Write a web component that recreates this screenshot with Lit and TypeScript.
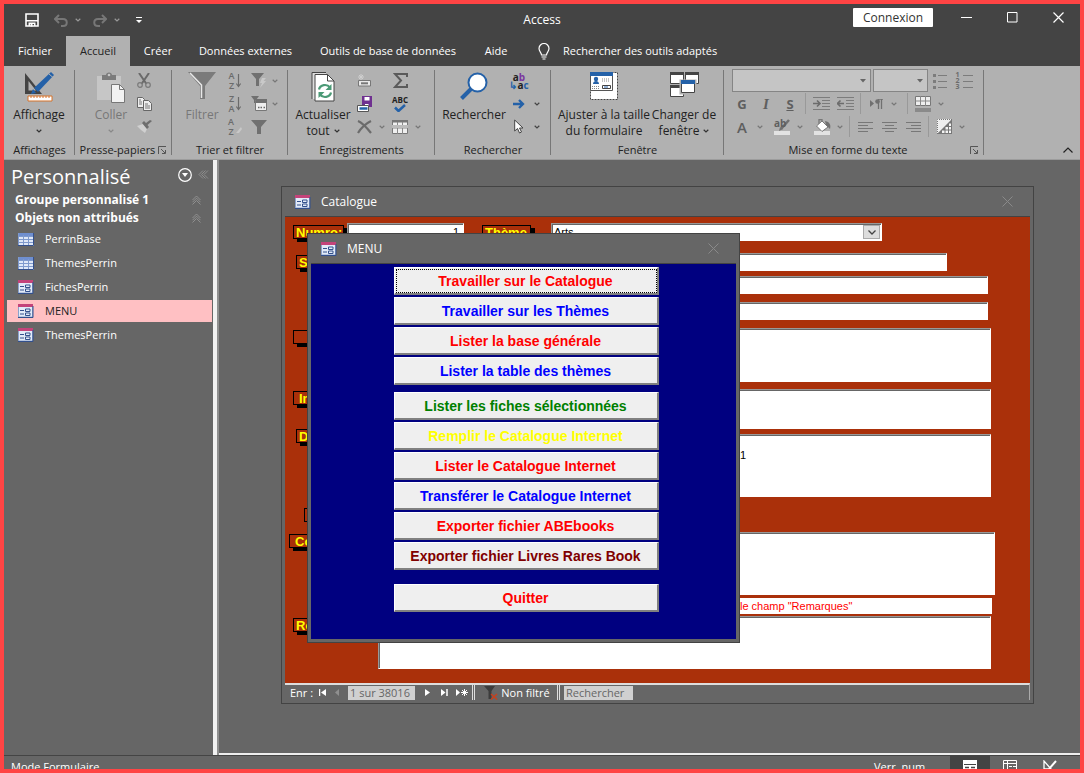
import { LitElement, html, css, svg, TemplateResult } from "lit";
import { customElement, property } from "lit/decorators.js";
import { classMap } from "lit/directives/class-map.js";

const icon = (w: number, h: number, body: TemplateResult) =>
  html`<svg width=${w} height=${h} viewBox="0 0 ${w} ${h}" fill="none" aria-hidden="true">${body}</svg>`;

const chevron = (color = "#777") => icon(6, 4, svg`<path d="M.7.8 3 3 5.3.8" stroke=${color} stroke-width="1.2"/>`);

const icons = {
  save: icon(14, 14, svg`<path d="M1 1h12v12H1z" stroke="#fff" stroke-width="1.6"/><path d="M1 7h12v1.500H1zM3.500 9.500h7V13H9v-2H5v2H3.500z" fill="#fff"/><path d="M5.500 11h2v2.500h-2z" fill="#fff"/>`),
  undo: icon(14, 13, svg`<path d="M1 5h8c5 0 5 7 0 7H7M5 1 1 5l4 4" stroke="#777" stroke-width="2"/>`),
  redo: icon(14, 13, svg`<path d="M13 5H5C0 5 0 12 5 12h2M9 1l4 4-4 4" stroke="#777" stroke-width="2"/>`),
  custom: icon(6, 6, svg`<path d="M0 .5h6" stroke="#fff"/><path d="M0 3h6L3 6z" fill="#fff"/>`),
  min: icon(11, 11, svg`<path d="M0 5.500h11" stroke="#fff"/>`),
  max: icon(11, 11, svg`<path d="M.5.5h9.500v9.500H.5z" stroke="#fff"/>`),
  close: icon(11, 11, svg`<path d="M.5.5l10 10M10.500.5l-10 10" stroke="#fff" stroke-width="1.200"/>`),
  bulb: icon(12, 17, svg`<path d="M3.500 12C3.500 9.500 1 8.500 1 5.500a5 5 0 0 1 10 0c0 3-2.500 4-2.500 6.500zM3.500 14h5M4.500 16h3" stroke="#fff" stroke-width="1.200"/>`),
  view: icon(32, 30, svg`<path d="M2 1v21h17z" fill="#444"/><path d="M5.500 9v9.500H13z" fill="#b1b1b1"/><path d="M28 0l3 3-16 17-4-4z" fill="#2461a8"/><path d="M10 17l3 4-5 1z" fill="#2461a8"/><path d="M26 2l4 3.500" stroke="#b1b1b1"/><path d="M5 24h24v5H5z" fill="#fff" stroke="#d5722a"/><path d="M8 24v2M11 24v2M14 24v2M17 24v2M20 24v2M23 24v2M26 24v2" stroke="#d5722a"/>`),
  paste: icon(28, 31, svg`<path d="M0 4h24v24H0z" fill="#c6c6c6"/><path d="M5 8V3h4C9-.5 15-.5 15 3h4v5z" fill="#7b7b7b"/><circle cx="12" cy="3" r="1.300" fill="#c6c6c6"/><path d="M14.500 12.500h8l5 5v13h-13z" fill="#f2f2f2" stroke="#777"/><path d="M22.500 12.500v5h5" stroke="#777"/>`),
  cut: icon(14, 15, svg`<path d="M2 0l7.500 11M12 0 4.500 11" stroke="#6a6a6a" stroke-width="2"/><circle cx="3" cy="12" r="2.300" stroke="#7a7a7a" stroke-width="1.200"/><circle cx="11" cy="12" r="2.300" stroke="#7a7a7a" stroke-width="1.200"/>`),
  copy: icon(15, 14, svg`<path d="M.5.5h5l2 2v8h-7z" fill="#eee" stroke="#666"/><path d="M6.500 3.500h5l3 3v7h-8z" fill="#eee" stroke="#666"/><path d="M2 3h2M2 5h3M2 7h3M8 7h3M8 9h5M8 11h5" stroke="#777"/>`),
  brush: icon(15, 13, svg`<path d="M0 6l6-2 4 5-2 4-4-3z" fill="#d0d0d0"/><path d="M5 3l5 6 2-2-1.500-2L15 1l-2-1-4 3-2-2z" fill="#6e6e6e"/>`),
  filter: icon(28, 28, svg`<path d="M0 0h28L17 14v13h-5V14z" fill="#7b7b7b"/><path d="M2 1l11.500 12v13" stroke="#e8e8e8" stroke-width="1.500"/>`),
  funnel: icon(16, 14, svg`<path d="M0 0h16L10 7v7H6V7z" fill="#707070"/>`),
  bolt: icon(16, 15, svg`<path d="M0 0h13L8 6v7H5V6z" fill="#707070"/><path d="M11 5l4 0-2.500 3H15l-6 7 2-5H9z" fill="#c9c9c9"/>`),
  advanced: icon(17, 16, svg`<path d="M0 0h8L5 4v3H3V4z" fill="#707070"/><path d="M4.500 4.500h11v10h-11z" fill="#eee" stroke="#777"/><path d="M5 3h11v4H5z" fill="#707070"/><path d="M7 11.500h1.500M9.500 11.500H11M12.500 11.500H14" stroke="#666" stroke-width="1.500"/>`),
  refresh: icon(24, 30, svg`<path d="M1 1h14v26H1z" fill="#ddd"/><path d="M1 27V.5h14" stroke="#444"/><path d="M4 2.500h12.500l6.500 6.500v20H4z" fill="#fff" stroke="#444"/><path d="M16.500 2.500v6.500H23" stroke="#444"/><path d="M8 17.500c1-5 8-6 11-2M20 20.500c-1 5-8 6-11 2" stroke="#4b9a76" stroke-width="2.200"/><path d="M20.500 12v6h-6zM7.500 26v-6h6z" fill="#4b9a76"/>`),
  newRec: icon(13, 13, svg`<path d="M3 0v6M0 3h6M1 1l4 4M5 1 1 5" stroke="#cfcfcf"/><path d="M.5 6.500h12v5.500H.5z" fill="#e8e8e8" stroke="#777"/><path d="M3 9.300h7" stroke="#777" stroke-width="2"/>`),
  saveRec: icon(15, 16, svg`<path d="M5 0h10v11H5z" fill="#6f3090"/><path d="M7.500 1h5v3.500h-5zM8 8h3.500v3H8z" fill="#fff"/><path d="M.5 9.500h11v6H.5z" fill="#fff" stroke="#555"/><path d="M2.500 12.500h8" stroke="#2461a8" stroke-width="2.500"/>`),
  cross: icon(15, 14, svg`<path d="M1 1c5 2 9 7 13 12M14 1C8 4 4 8 1 13" stroke="#6c6c6c" stroke-width="2.200"/>`),
  sigma: icon(15, 15, svg`<path d="M14 4V1H2l6 6.500L2 14h12v-3" stroke="#5a5a5a" stroke-width="2"/>`),
  check: icon(12, 8, svg`<path d="M1 3.500 4.500 7 11 1" stroke="#2461a8" stroke-width="2.500"/>`),
  more: icon(16, 14, svg`<path d="M.5.500h15v13H.5z" fill="#f0f0f0" stroke="#777"/><path d="M0 0h16v2.500H0z" fill="#777"/><path d="M0 8h16M5.500 2v12M10.500 2v12" stroke="#888"/><path d="M0 6.500h16" stroke="#bbb" stroke-width="3"/>`),
  find: icon(28, 28, svg`<path d="M1.500 26.500 11 17" stroke="#2461a8" stroke-width="4"/><circle cx="17.500" cy="10.500" r="9" fill="#fff" stroke="#2461a8" stroke-width="2"/>`),
  arrow: icon(12, 10, svg`<path d="M0 5h10M6 1l4 4-4 4" stroke="#2461a8" stroke-width="2.300"/>`),
  pointer: icon(10, 15, svg`<path d="M.7 1v11L3.500 9.500l2 4.500 2-1-2-4H9z" fill="#fff" stroke="#444"/>`),
  fit: icon(28, 28, svg`<path d="M.5.5h27v27H.5z" fill="#fff" stroke="#444" stroke-dasharray="2 1"/><path d="M.5.5h22v18H.5z" fill="#fff" stroke="#555"/><path d="M0 0h23v4H0z" fill="#2461a8"/><circle cx="6" cy="7" r="2.200" fill="#2461a8"/><path d="M3 12c0-4 6-4 6 0z" fill="#2461a8"/><path d="M12 7h8M12 9h8M2 14.500h8M2 16.500h8" stroke="#888" stroke-dasharray="1 1"/><path d="M12.500 13.500h8v3h-8z" fill="#fff" stroke="#444"/><path d="M14 15h4" stroke="#2461a8"/>`),
  switchWin: icon(29, 26, svg`<path d="M.5 1.500h13v10H.5zM15.500 1.500h13v10h-13zM.5 14.500h13v10H.5z" fill="#fff" stroke="#444"/><path d="M0 0h14v3H0zM15 0h14v3H15zM0 13h14v3H0z" fill="#444"/><path d="M10.500 8.500h15v13h-15z" fill="#fff" stroke="#b1b1b1" stroke-width="2"/><path d="M11.500 9.500h13v11h-13z" fill="#fff" stroke="#444"/><path d="M11 8h14v4H11z" fill="#2461a8"/>`),
  bullets: icon(14, 16, svg`<path d="M5 2.500h9M5 8.500h9M5 14.500h9" stroke="#7c7c7c"/><path d="M0 2.500h3M0 8.500h3M0 14.500h3" stroke="#7c7c7c" stroke-width="3"/>`),
  numbers: icon(10, 16, svg`<path d="M0 2.500h10M0 8.500h10M0 14.500h10" stroke="#7c7c7c"/>`),
  indent: icon(17, 13, svg`<path d="M0 .5h17M9 3.500h8M9 6.500h8M9 9.500h8M0 12.500h17" stroke="#7c7c7c"/><path d="M0 6.500h6M4 3.500l3 3-3 3" stroke="#6c6c6c" stroke-width="1.600"/>`),
  outdent: icon(17, 13, svg`<path d="M0 .5h17M9 3.500h8M9 6.500h8M9 9.500h8M0 12.500h17" stroke="#7c7c7c"/><path d="M7 6.500H1M3.500 3.500l-3 3 3 3" stroke="#6c6c6c" stroke-width="1.600"/>`),
  para: icon(13, 10, svg`<path d="M0 1v7l4-3.500z" fill="#707070"/><path d="M9 0h4M8.500 0v10M11.500 0v10" stroke="#707070" stroke-width="1.300"/><circle cx="7.500" cy="2.500" r="2.300" fill="#707070"/>`),
  gridFill: icon(16, 16, svg`<path d="M.5.5h15v9H.5z" fill="#eee" stroke="#777"/><path d="M0 5h16M5.500 0v10M10.500 0v10" stroke="#888"/><path d="M0 12h16v4H0z" fill="#8a8a8a"/>`),
  bucket: icon(17, 16, svg`<path d="M0 12h16v4H0z" fill="#e2e2e2"/><path d="M5 5V.7h3V6" stroke="#777" stroke-width="1.300"/><path d="M11 2c5 1 6 4 5 8l-4-4z" fill="#707070"/><path d="M8 2l6 6-6 4.500L2.500 7z" fill="#fff" stroke="#777"/>`),
  pen: icon(16, 16, svg`<path d="M0 12h16v4H0z" fill="#e2e2e2"/><path d="M15 1 7 10" stroke="#707070" stroke-width="2.500"/><path d="M6 8l3 2-4 2z" fill="#707070"/>`),
  alignL: icon(15, 10, svg`<path d="M0 .5h15M0 3.500h10M0 6.500h15M0 9.500h10" stroke="#777"/>`),
  alignC: icon(15, 10, svg`<path d="M0 .5h15M3 3.500h9M0 6.500h15M3 9.500h9" stroke="#777"/>`),
  alignR: icon(15, 10, svg`<path d="M0 .5h15M5 3.500h10M0 6.500h15M5 9.500h10" stroke="#777"/>`),
  altRow: icon(15, 15, svg`<path d="M0 0h15v15H0z" fill="#eee"/><path d="M.5 15V.5H15" stroke="#777" stroke-dasharray="1 1"/><path d="M15 0v15H0z" fill="#777"/><path d="M8.500 8h2.500v2.500H8.500zM12 4.500h2V7h-2zM12 8h2v2.500h-2zM5 11.500h2.500V14H5zM8.500 11.500h2.500V14H8.500zM12 11.500h2V14h-2z" fill="#f4f4f4"/>`),
  launcher: icon(8, 8, svg`<path d="M.5 8V.5H8M7.500 4v3.500H4M3 3l4 4" stroke="#555"/>`),
  collapse: icon(10, 6, svg`<path d="M.5 5.500 5 1l4.500 4.500" stroke="#222" stroke-width="1.200"/>`),
  navDown: icon(14, 14, svg`<circle cx="7" cy="7" r="6.300" stroke="#fff" stroke-width="1.200"/><path d="M4 5h6L7 9z" fill="#fff"/>`),
  navLeft: icon(11, 9, svg`<path d="M5 .5l-4 4 4 4M7.500.5l-4 4 4 4M10 .5l-4 4 4 4" stroke="#999" stroke-width=".8"/>`),
  navUp: icon(9, 10, svg`<path d="M.5 5l4-4 4 4M.5 9.500l4-4 4 4M.5 7.200l4-4 4 4" stroke="#999" stroke-width=".8"/>`),
  table: icon(16, 13, svg`<path d="M0 0h16v13H0z" fill="#dfe8f8"/><path d="M0 0h16v3H0z" fill="#6f8fd0"/><path d="M0 3.500h16M0 6.500h16M0 9.500h16M.5 0v13M5.500 2v11M10.500 2v11" stroke="#7f9ace"/><path d="M15.500 0v12.500H0" stroke="#33508c"/>`),
  form: icon(16, 14, svg`<path d="M.5.5h14v12.500H.5z" fill="#e3ebf8" stroke="#8ca2cc"/><path d="M0 0h15v3H0z" fill="#c4437a"/><path d="M2 6.500h4M2 10h4" stroke="#33508c"/><path d="M7.500 5h4.500v2.500H7.500zM7.500 9h4.500v2.500H7.500z" stroke="#33508c"/><path d="M15 2v11.500H0" stroke="#33508c"/>`),
  winClose: icon(11, 11, svg`<path d="M.5.5l10 10M10.500.5l-10 10" stroke="#8a8a8a"/>`),
  first: icon(7, 7, svg`<path d="M.5 0v7" stroke="#fff" stroke-width="1.500"/><path d="M7 0v7L2 3.500z" fill="#fff"/>`),
  prev: icon(4, 7, svg`<path d="M4 0v7L0 3.500z" fill="#8f8f8f"/>`),
  next: icon(5, 7, svg`<path d="M0 0v7l5-3.500z" fill="#fff"/>`),
  last: icon(7, 7, svg`<path d="M6 0v7" stroke="#fff" stroke-width="1.500"/><path d="M0 0v7l4.500-3.500z" fill="#fff"/>`),
  add: icon(12, 7, svg`<path d="M0 0v7l4-3.500z" fill="#fff"/><path d="M8.500 0v7M5 3.500h7M6 1l5 5M11 1 6 6" stroke="#fff"/>`),
  noFilter: icon(14, 14, svg`<path d="M0 0h11L7.500 5v8h-3V5z" fill="#3c3c3c"/><path d="M7 8l6 5.500M13 8l-6 5.500" stroke="#c8401c" stroke-width="1.500"/>`),
  comboArrow: icon(8, 5, svg`<path d="M.5.500 4 4 7.500.5" stroke="#444" stroke-width="1.300"/>`),
  formView: icon(14, 14, svg`<path d="M0 0h14v14H0z" fill="#fff"/><path d="M1 4.500h12" stroke="#444"/><path d="M2 7.500h4M8 7.500h4M2 10.500h4M8 10.500h4" stroke="#444" stroke-width="1.500"/>`),
  sheetView: icon(14, 14, svg`<path d="M.5.5h13v13H.5zM0 3.500h14M4.500 0v14" stroke="#fff"/><path d="M6 6.500h3M10 6.500h3M6 9.500h3M10 9.500h3M6 12.500h3" stroke="#fff"/>`),
  designView: icon(14, 14, svg`<path d="M1 1v8h7z" stroke="#fff" stroke-width="1.300"/><path d="M13 1 6 9" stroke="#fff" stroke-width="2"/><path d="M0 11.500h14" stroke="#fff"/>`),
};

const base = css`
  * { box-sizing: border-box; }
  button, input, select, textarea { font: inherit; color: inherit; margin: 0; border-radius: 0; }
  button { border: 0; padding: 0; background: none; display: flex; align-items: center; justify-content: center; }
  svg { display: block; flex: none; }
`;

@customElement("access-ribbon")
export class AccessRibbon extends LitElement {
  static styles = [base, css`
    :host { display: flex; height: 94px; background: #b1b1b1; color: #222; font-size: 12px; line-height: 16px; border-bottom: 1px solid #9c9c9c; overflow: hidden; }
    .group { flex: none; position: relative; display: flex; flex-direction: column; }
    .group::after { content: ""; width: 1px; background: #777; position: absolute; right: 0; top: 4px; bottom: 4px; }
    .g1 { width: 71px; } .g2 { width: 97px; } .g3 { width: 116px; } .g4 { width: 147px; }
    .g5 { width: 116px; } .g6 { width: 173px; } .g7 { width: 260px; }
    .tools { height: 75px; display: flex; padding-left: 6px; }
    .g1 .tools { padding-left: 5px; }
    .g2 .tools { padding-left: 15px; }
    .g3 .tools { padding-left: 9px; }
    .caption { display: flex; height: 18px; line-height: 18px; padding: 0 4px; white-space: nowrap; font-size: 11px; }
    .caption span { flex: 1; text-align: center; }
    .caption button { width: 12px; }
    .big { flex-direction: column; justify-content: flex-start; width: 60px; padding-top: 6px; white-space: nowrap; }
    .big .art { height: 35px; display: flex; align-items: flex-start; }
    .big .line { display: flex; align-items: center; gap: 4px; height: 16px; }
    .narrow { width: 42px; } .wide { width: 94px; } .mid { width: 66px; } .std { width: 58px; }
    .off { color: #777; }
    .stack { display: flex; flex-direction: column; padding-top: 3px; }
    .row { display: flex; height: 23px; align-items: center; }
    .ic { width: 24px; height: 23px; flex: none; }
    .dd { width: 12px; height: 23px; flex: none; }
    .g3 .dd { width: 8px; }
    .az { font-size: 9px; line-height: 10px; font-weight: 600; color: #6b6b6b; gap: 2px; }
    .az b, .ab b, .nums b { display: block; font-weight: inherit; white-space: nowrap; }
    .ab { flex-direction: column; font-size: 10px; line-height: 8px; font-weight: 700; }
    .p { color: #7a35a0; } .b { color: #2461a8; }
    .abc { flex-direction: column; font-size: 8px; line-height: 8px; font-weight: 700; }
    .nums { font-size: 7px; line-height: 6px; color: #6b6b6b; gap: 3px; font-weight: 700; }
    .bold { font-weight: 700; } .ital { font-style: italic; font-family: "Liberation Serif", serif; font-weight: 700; } .und { font-weight: 700; text-decoration: underline; }
    .fmt { color: #5f5f5f; font-size: 13px; }
    .ital.fmt { font-size: 15px; }
    .letter.fmt { font-size: 15px; font-weight: 600; }
    .sep { width: 1px; height: 21px; background: #999; margin: 0 3px; flex: none; }
    .space { width: 4px; flex: none; }
    .combo { position: relative; height: 23px; margin-left: 2px; }
    .combo select { appearance: none; width: 100%; height: 23px; border: 1px solid #858585; background: #c5c5c5; padding: 0 6px; }
    .combo svg { position: absolute; right: 4px; top: 10px; pointer-events: none; }
    .face { width: 139px; } .size { width: 55px; }
    .hl { position: relative; }
    .hl span { position: absolute; left: 4px; top: 2px; font-size: 10px; line-height: 12px; font-weight: 700; }
    .fold { margin-left: auto; align-self: flex-end; width: 24px; height: 18px; }
  `];

  big(art: TemplateResult, l1: string, l2: string | null, cls = "", dd = true) {
    return html`<button class="big ${cls}"><span class="art">${art}</span><span class="line">${l1}</span>
      <span class="line">${l2}${dd ? chevron(cls.includes("off") ? "#888" : "#333") : ""}</span></button>`;
  }
  small(art: TemplateResult, name: string, dd = false, color = "#777") {
    return html`<button class="ic" aria-label=${name}>${art}</button>${dd ? html`<button class="dd" aria-label="${name}, options">${chevron(color)}</button>` : ""}`;
  }
  sort(a: string, b: string, name: string, down = true) {
    return html`<button class="ic az" aria-label=${name}><span><b>${a}</b><b>${b}</b></span>
      ${down ? icon(5, 14, svg`<path d="M2.500 0v12M.3 9.500l2.200 3 2.200-3" stroke="#6b6b6b" stroke-width="1.200"/>`) : icon(6, 14, svg`<path d="M0 13l5-6 1 2-3 4z" fill="#c8c8c8"/>`)}</button>`;
  }
  caption(text: string, launch = false) {
    return html`<div class="caption"><span>${text}</span>${launch ? html`<button aria-label="Options ${text}">${icons.launcher}</button>` : ""}</div>`;
  }
  render() {
    const caret = icon(8, 4, svg`<path d="M1 0h6L4 3.500z" fill="#666"/>`);
    return html`
      <section class="group g1"><div class="tools">${this.big(icons.view, "Affichage", null)}</div>${this.caption("Affichages")}</section>
      <section class="group g2"><div class="tools">${this.big(icons.paste, "Coller", null, "off narrow")}
        <div class="stack"><div class="row">${this.small(icons.cut, "Couper")}</div><div class="row">${this.small(icons.copy, "Copier")}</div><div class="row">${this.small(icons.brush, "Reproduire")}</div></div>
      </div>${this.caption("Presse-papiers", true)}</section>
      <section class="group g3"><div class="tools">${this.big(icons.filter, "Filtrer", null, "off narrow", false)}
        <div class="stack"><div class="row">${this.sort("A", "Z", "Croissant")}</div><div class="row">${this.sort("Z", "A", "Décroissant")}</div><div class="row">${this.sort("A", "Z", "Supprimer un tri", false)}</div></div>
        <div class="stack"><div class="row">${this.small(icons.bolt, "Sélection", true)}</div><div class="row">${this.small(icons.advanced, "Options avancées", true)}</div><div class="row">${this.small(icons.funnel, "Activer le filtre")}</div></div>
      </div>${this.caption("Trier et filtrer")}</section>
      <section class="group g4"><div class="tools">${this.big(icons.refresh, "Actualiser", "tout", "std")}
        <div class="stack"><div class="row">${this.small(icons.newRec, "Nouveau")}</div><div class="row">${this.small(icons.saveRec, "Enregistrer")}</div><div class="row">${this.small(icons.cross, "Supprimer", true)}</div></div>
        <div class="stack"><div class="row">${this.small(icons.sigma, "Totaux")}</div><div class="row"><button class="ic abc"><span>ABC</span>${icons.check}</button></div><div class="row">${this.small(icons.more, "Plus", true)}</div></div>
      </div>${this.caption("Enregistrements")}</section>
      <section class="group g5"><div class="tools">${this.big(icons.find, "Rechercher", null, "mid", false)}
        <div class="stack"><div class="row"><button class="ic ab"><b>a<span class="p">b</span></b><b><span class="b">↳</span>a<span class="b">c</span></b></button></div>
        <div class="row">${this.small(icons.arrow, "Atteindre", true, "#444")}</div><div class="row">${this.small(icons.pointer, "Sélectionner", true, "#444")}</div></div>
      </div>${this.caption("Rechercher")}</section>
      <section class="group g6"><div class="tools">${this.big(icons.fit, "Ajuster à la taille", "du formulaire", "wide", false)}${this.big(icons.switchWin, "Changer de", "fenêtre", "mid")}</div>${this.caption("Fenêtre")}</section>
      <section class="group g7"><div class="tools"><div class="stack">
        <div class="row"><div class="combo face"><select aria-label="Police"><option></option></select>${caret}</div><div class="combo size"><select aria-label="Taille de police"><option></option></select>${caret}</div>
          ${this.small(icons.bullets, "Puces")}<button class="ic nums" aria-label="Numérotation"><span><b>1</b><b>2</b><b>3</b></span>${icons.numbers}</button></div>
        <div class="row"><button class="ic fmt bold">G</button><button class="ic fmt ital">I</button><button class="ic fmt und">S</button><i class="sep"></i>${this.small(icons.indent, "Augmenter le retrait")}${this.small(icons.outdent, "Diminuer le retrait")}<i class="sep"></i>${this.small(icons.para, "De gauche à droite", true)}<span class="space"></span><i class="sep"></i>${this.small(icons.gridFill, "Quadrillage", true)}</div>
        <div class="row"><button class="ic fmt letter">A</button><button class="dd" aria-label="Couleur de police">${chevron()}</button><span class="space"></span><button class="ic fmt hl"><span>ab</span>${icons.pen}</button><button class="dd" aria-label="Couleur de surlignage">${chevron()}</button><span class="space"></span>${this.small(icons.bucket, "Couleur d'arrière-plan", true)}<i class="sep"></i>${this.small(icons.alignL, "Aligner à gauche")}${this.small(icons.alignC, "Centrer")}${this.small(icons.alignR, "Aligner à droite")}<i class="sep"></i>${this.small(icons.altRow, "Couleur de ligne", true)}</div>
      </div></div>${this.caption("Mise en forme du texte", true)}</section>
      <button class="fold" aria-label="Réduire le ruban">${icons.collapse}</button>`;
  }
}

@customElement("access-window")
export class AccessWindow extends LitElement {
  @property() heading = "";
  static styles = [base, css`
    :host { display: flex; flex-direction: column; background: #666; border: 1px solid #434343; padding: 0 3px 3px; }
    .bar { display: flex; align-items: center; height: 30px; padding: 0 17px 0 10px; gap: 10px; color: #fff; font-size: 12px; border-bottom: 1px solid #434343; }
    .bar h2 { flex: 1; margin: 0; font-size: 12px; font-weight: 400; }
  `];
  render() {
    return html`<div class="bar">${icons.form}<h2>${this.heading}</h2><button aria-label="Fermer">${icons.winClose}</button></div><slot></slot>`;
  }
}

@customElement("catalogue-form")
export class CatalogueForm extends LitElement {
  static styles = [base, css`
    :host { display: block; color: #000; font: 11px/14px "Liberation Sans", Arial, sans-serif; }
    .form { background: #aa300a; padding: 6px 0 14px; }
    .row { display: flex; align-items: stretch; padding-right: 39px; }
    .cell { width: 93px; flex: none; padding: 2px 0 0 8px; }
    .tag { display: block; width: 60px; height: 14px; line-height: 13px; font-size: 13px; font-weight: 700; color: #ff0; background: #aa300a; border: 1px solid #000; box-shadow: 4px 3px 0 #000; padding-left: 2px; white-space: nowrap; }
    .in3 { padding-left: 11px; } .in4 { padding-left: 4px; } .in19 { padding-left: 19px; }
    .tag.inset { padding-left: 5px; }
    .field { flex: 1; min-width: 0; border: 1px solid #fff; border-top-color: #999; border-left-color: #999; box-shadow: inset 1px 1px 0 #666; background: #fff; border-radius: 0; resize: none; padding: 1px 4px; outline: 0; overflow: hidden; }
    .line { height: 18px; margin-top: 8px; }
    .top { margin-top: 0; padding: 0 0 0 8px; }
    .top .tag { margin: 2px 3px 0 0; width: 51px; }
    .top .num { flex: none; width: 117px; text-align: right; }
    .top .theme { margin: 2px 20px 0 18px; width: 49px; }
    .combo { position: relative; width: 331px; display: flex; }
    .combo .field { appearance: none; padding: 0 2px; }
    .arrow { position: absolute; right: 2px; top: 2px; width: 17px; height: 14px; background: #ddd; border: 1px solid #aaa; display: flex; align-items: center; justify-content: center; pointer-events: none; }
    .short { padding-right: 83px; margin-top: 12px; }
    .long { padding-right: 42px; }
    .tight { margin-top: 5px; }
    .h54 { height: 54px; margin-top: 8px; }
    .h40 { height: 40px; margin-top: 7px; }
    .h68 { height: 68px; }
    .h68 .cell { padding-top: 0; }
    .h68 .field { margin-top: 5px; padding: 13px 4px 0 355px; }
    .lone { margin-top: 11px; height: 14px; }
    .lone .cell { padding-top: 0; }
    .h63 { height: 63px; margin-top: 10px; padding-right: 35px; }
    .note { height: 16px; margin: 3px 38px 2px 93px; background: #fff; color: #f00; padding-left: 362px; line-height: 16px; white-space: nowrap; }
    .h53 { height: 53px; }
    .nav { display: flex; height: 17px; align-items: center; color: #fff; background: #666; border-top: 2px solid #ddd; border-right: 1px solid #aaa; font: 11px/14px "Open Sans", "Noto Sans", sans-serif; padding-left: 5px; white-space: nowrap; }
    .nav label { width: 28px; }
    .nav button { height: 15px; width: 17px; }
    .nav button:first-of-type { width: 8px; } .nav button:nth-of-type(2) { width: 22px; }
    .nav input { height: 14px; border: 0; background: #d0d0d0; color: #666; padding: 0 2px; outline: 0; }
    .nav input::placeholder { color: #666; opacity: 1; }
    .pos { width: 67px; margin-right: 4px; } .seek { width: 69px; }
    .nav .bar { width: 3px; height: 15px; border: solid #ddd; border-width: 0 1px; margin: 0 4px 0 2px; }
    .nav .flt { width: 76px; gap: 3px; }
  `];
  render() {
    const row = (cls: string, id: string, text: string, cell = "", value = "") => html`
      <div class="row ${cls}"><div class="cell ${cell}">${text || cell ? html`<label class="tag ${cell === "in4" || id === "inv" ? "inset" : ""}" for=${id}>${text}</label>` : ""}</div>
      <textarea class="field" id=${id} aria-label=${id} .value=${value}></textarea></div>`;
    return html`
      <div class="form">
        <div class="row line top"><label class="tag" for="num">Numro:</label><input class="field num" id="num" value="1">
          <label class="tag theme" for="theme">Thème</label>
          <div class="combo"><select class="field" id="theme"><option>Arts</option></select><span class="arrow">${icons.comboArrow}</span></div></div>
        ${row("line short", "s", "S", "in3")}
        ${row("line long tight", "l3", "")}
        ${row("line long", "l4", "")}
        ${row("h54", "l5", "", "in8")}
        ${row("h40", "inv", "In")}
        ${row("h68", "desc", "D", "in3", "01")}
        <div class="row lone"><div class="cell in19"><span class="tag"></span></div></div>
        ${row("h63", "com", "Co", "in4")}
        <div class="note">le champ "Remarques"</div>
        ${row("h53", "rem", "Re")}
      </div>
      <div class="nav">
        <label for="pos">Enr :</label><button aria-label="Premier">${icons.first}</button><button aria-label="Précédent">${icons.prev}</button>
        <input class="pos" id="pos" value="1 sur 38016"><button aria-label="Suivant">${icons.next}</button><button aria-label="Dernier">${icons.last}</button><button aria-label="Nouvel enregistrement">${icons.add}</button>
        <i class="bar"></i><button class="flt">${icons.noFilter}Non filtré</button><i class="bar"></i>
        <input class="seek" aria-label="Rechercher" placeholder="Rechercher">
      </div>`;
  }
}

const menuGroups: [string, string][][] = [
  [["Travailler sur le Catalogue", "red"], ["Travailler sur les Thèmes", "blue"], ["Lister la base générale", "red"], ["Lister la table des thèmes", "blue"]],
  [["Lister les fiches sélectionnées", "green"], ["Remplir le Catalogue Internet", "yellow"], ["Lister le Catalogue Internet", "red"], ["Transférer le Catalogue Internet", "blue"], ["Exporter fichier ABEbooks", "red"], ["Exporter fichier Livres Rares Book", "maroon"]],
  [["Quitter", "red"]],
];

@customElement("menu-form")
export class MenuForm extends LitElement {
  static styles = [base, css`
    :host { flex: 1; background: #000080; display: flex; flex-direction: column; align-items: center; padding: 3px 0 27px 5px; font: 700 14px/16px "Liberation Sans", Arial, sans-serif; }
    .set { display: flex; flex-direction: column; gap: 2px; width: 265px; margin-bottom: 7px; }
    .set + .set { margin-bottom: 14px; }
    .set:last-child { margin-bottom: 0; }
    .cmd { height: 28px; background: #efefef; border: 1px solid #fff; border-right: 2px solid #808080; border-bottom: 2px solid #808080; white-space: nowrap; }
    .current { outline: 1px dotted #000; outline-offset: -3px; }
    .red { color: #f00; } .blue { color: #00f; } .green { color: #008000; } .yellow { color: #ff0; } .maroon { color: #800000; }
  `];
  render() {
    return menuGroups.map((set, g) => html`<div class="set">${set.map(([text, color], i) =>
      html`<button class=${classMap({ cmd: true, [color]: true, current: g === 0 && i === 0 })}>${text}</button>`)}</div>`);
  }
}

const objects = [
  { name: "PerrinBase", kind: "table" }, { name: "ThemesPerrin", kind: "table" },
  { name: "FichesPerrin", kind: "form" }, { name: "MENU", kind: "form", current: true }, { name: "ThemesPerrin", kind: "form" },
];
const tabs = [["Fichier", "t1"], ["Accueil", "t2 on"], ["Créer", "t3"], ["Données externes", "t4"], ["Outils de base de données", "t5"], ["Aide", "t6"]];

@customElement("app-root")
export class AppRoot extends LitElement {
  static styles = [base, css`
    :host { display: block; height: 100vh; font: 12px/16px "Open Sans", "Noto Sans", sans-serif; color: #fff; }
    .frame { height: 100%; border: 4px solid #f44; background: #666; display: grid; grid-template-rows: 32px 30px 94px 1fr 14px; grid-template-columns: minmax(0, 1fr); overflow: hidden; }
    .title { background: #444; display: grid; grid-template-columns: 1fr auto 1fr; align-items: center; padding: 0 16px; }
    .quick { display: flex; align-items: center; gap: 7px; padding-left: 5px; }
    .quick .gap { margin-right: 5px; }
    .quick .last { margin-left: 9px; }
    .quick .first { margin-right: 8px; }
    .sys { display: flex; align-items: center; justify-content: flex-end; gap: 35px; padding-bottom: 5px; }
    .login { background: #fff; color: #333; width: 80px; height: 19px; margin-right: -7px; border-radius: 1px; }
    .tabs { background: #444; display: flex; white-space: nowrap; font-size: 11px; }
    .tab { flex: none; color: #fff; }
    .t1 { width: 62px; } .t2 { width: 64px; } .t3 { width: 56px; } .t4 { width: 119px; } .t5 { width: 166px; } .t6 { width: 50px; }
    .on { background: #b1b1b1; color: #222; }
    .tell { gap: 13px; margin-left: 17px; color: #fff; }
    .body { display: flex; min-height: 0; }
    .side { width: 209px; flex: none; padding: 0 1px 0 3px; display: flex; flex-direction: column; }
    .side h1 { margin: 0; font-size: 20px; line-height: 26px; font-weight: 400; flex: 1; }
    .head { display: flex; align-items: center; gap: 6px; padding: 4px 3px 6px 4px; height: 31px; }
    .head h1 { padding-top: 4px; }
    .sec { display: flex; align-items: center; justify-content: space-between; height: 18px; padding: 0 11px 0 8px; font-weight: 700; }
    .list { list-style: none; margin: 0; padding: 1px 0 0; display: flex; flex-direction: column; gap: 2px; }
    .obj { display: flex; align-items: center; gap: 11px; padding-left: 11px; height: 22px; color: #fff; text-decoration: none; font-size: 11px; }
    .obj.cur { background: #ffc0c3; color: #222; }
    .split { width: 6px; flex: none; background: #f2f2f2; border-right: 2px solid #909090; }
    .desk { flex: 1; position: relative; border-bottom: 2px solid #eee; overflow: hidden; }
    .win1 { position: absolute; left: 62px; top: 26px; width: 753px; }
    .win2 { position: absolute; left: 88px; top: 73px; width: 433px; height: 410px; }
    .status { overflow: hidden; border-top: 1px solid #444; font-size: 11px; }
    .strip { display: flex; align-items: center; height: 21px; padding-left: 7px; }
    .strip .num { margin-left: auto; margin-right: 22px; }
    .strip button { width: 40px; height: 21px; }
    .strip .sel { background: #444; }
    .strip button:last-child { margin-right: 10px; }
  `];
  render() {
    return html`<div class="frame">
      <header class="title">
        <div class="quick"><button class="first" aria-label="Enregistrer">${icons.save}</button><button aria-label="Annuler">${icons.undo}</button><button class="gap" aria-label="Liste annuler">${chevron("#999")}</button><button aria-label="Rétablir">${icons.redo}</button><button aria-label="Liste rétablir">${chevron("#999")}</button><button class="last" aria-label="Personnaliser">${icons.custom}</button></div>
        <span>Access</span>
        <div class="sys"><button class="login">Connexion</button><button aria-label="Réduire">${icons.min}</button><button aria-label="Agrandir">${icons.max}</button><button aria-label="Fermer">${icons.close}</button></div>
      </header>
      <nav class="tabs">${tabs.map(([t, c]) => html`<button class="tab ${c}">${t}</button>`)}<button class="tell">${icons.bulb}Rechercher des outils adaptés</button></nav>
      <access-ribbon></access-ribbon>
      <main class="body">
        <aside class="side">
          <div class="head"><h1>Personnalisé</h1><button aria-label="Options du volet">${icons.navDown}</button><button aria-label="Réduire le volet">${icons.navLeft}</button></div>
          <div class="sec">Groupe personnalisé 1${icons.navUp}</div><div class="sec">Objets non attribués${icons.navUp}</div>
          <ul class="list">${objects.map((o) => html`<li><a href="#" class=${classMap({ obj: true, cur: !!o.current })}>${o.kind === "table" ? icons.table : icons.form}${o.name}</a></li>`)}</ul>
        </aside>
        <div class="split"></div>
        <div class="desk">
          <access-window class="win1" heading="Catalogue"><catalogue-form></catalogue-form></access-window>
          <access-window class="win2" heading="MENU"><menu-form></menu-form></access-window>
        </div>
      </main>
      <footer class="status"><div class="strip"><span>Mode Formulaire</span><span class="num">Verr. num.</span><button class="sel" aria-label="Mode Formulaire">${icons.formView}</button><button aria-label="Mode Feuille de données">${icons.sheetView}</button><button aria-label="Mode Création">${icons.designView}</button></div></footer>
    </div>`;
  }
}
